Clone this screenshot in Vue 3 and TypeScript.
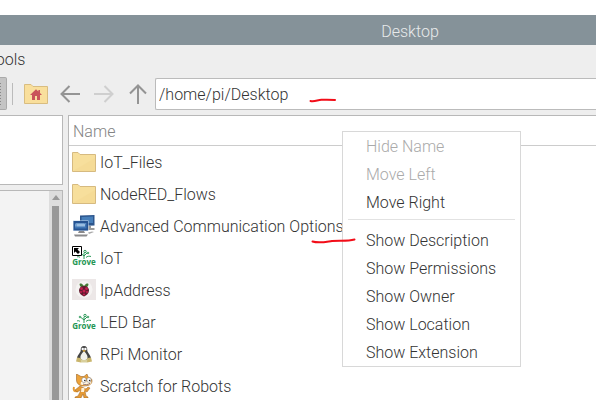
<script setup lang="ts">
import { ref } from 'vue'

type IconKind = 'folder' | 'network' | 'grove' | 'raspberry' | 'tux' | 'cat'

interface FileEntry {
  name: string
  icon: IconKind
  link?: boolean
}

const path = ref('/home/pi/Desktop')

const files: FileEntry[] = [
  { name: 'IoT_Files', icon: 'folder' },
  { name: 'NodeRED_Flows', icon: 'folder' },
  { name: 'Advanced Communication Options', icon: 'network' },
  { name: 'IoT', icon: 'grove', link: true },
  { name: 'IpAddress', icon: 'raspberry' },
  { name: 'LED Bar', icon: 'grove' },
  { name: 'RPi Monitor', icon: 'tux' },
  { name: 'Scratch for Robots', icon: 'cat' },
]

const columnActions = [
  { label: 'Hide Name', disabled: true },
  { label: 'Move Left', disabled: true },
  { label: 'Move Right', disabled: false },
]

const showActions = ['Show Description', 'Show Permissions', 'Show Owner', 'Show Location', 'Show Extension']
</script>

<template>
  <div class="window">
    <header class="titlebar">Desktop</header>

    <nav class="menubar">
      <button type="button" class="menu-button">Tools</button>
    </nav>

    <div class="toolbar">
      <button type="button" class="toggle" aria-label="Toggle view"></button>
      <span class="divider"></span>
      <button type="button" class="tool home" aria-label="Home">
        <svg width="24" height="20" viewBox="0 0 24 20">
          <path d="M.5 19.5V.5H7l2 2h14.5v17z" fill="#f9df9c" stroke="#d9bd80" />
          <path d="M12 5.2 6 11h2v5h3v-4h2v4h3v-5h2l-2-2V6h-1.6v1.4z" fill="#c9545a" />
        </svg>
      </button>
      <button type="button" class="tool" aria-label="Back">
        <svg width="20" height="20" viewBox="0 0 20 20" fill="none" stroke="#949494" stroke-width="2">
          <path d="M20 10H1.500M9.500 2 1.500 10l8 8" />
        </svg>
      </button>
      <button type="button" class="tool" aria-label="Forward" disabled>
        <svg width="20" height="20" viewBox="0 0 20 20" fill="none" stroke="#cfcfcf" stroke-width="2">
          <path d="M0 10h18.500M10.500 2l8 8-8 8" />
        </svg>
      </button>
      <button type="button" class="tool" aria-label="Up">
        <svg width="20" height="20" viewBox="0 0 20 20" fill="none" stroke="#949494" stroke-width="2">
          <path d="M10 20V1.500M2 9.500l8-8 8 8" />
        </svg>
      </button>
      <input v-model="path" class="path" type="text" aria-label="Location" spellcheck="false" />
    </div>

    <div class="body">
      <aside class="side">
        <div class="places"></div>
        <div class="tree">
          <div class="scrollbar">
            <svg width="8" height="5" viewBox="0 0 8 5"><path d="M4 0 8 5H0z" fill="#999" /></svg>
            <div class="thumb"></div>
          </div>
        </div>
      </aside>

      <main class="listing">
        <table>
          <thead>
            <tr><th scope="col">Name</th></tr>
          </thead>
          <tbody>
            <tr v-for="file in files" :key="file.name">
              <td>
                <div class="entry">
                  <svg v-if="file.icon === 'folder'" width="24" height="24" viewBox="0 0 24 24">
                    <path d="M.5 21.500V2.500H6l2 2h15.500v17z" fill="#f7df9c" stroke="#d6ba80" />
                    <path d="M1 21 23 8v13z" fill="#f3d993" opacity=".6" />
                  </svg>
                  <svg v-else-if="file.icon === 'network'" width="24" height="24" viewBox="0 0 24 24">
                    <path d="M8 1.500 22.500 1v10.500L8 12z" fill="#2d568d" />
                    <path d="M9.500 3 21 2.500V9H9.500z" fill="#477fba" />
                    <path d="M15 12h4v2h3.500v2H13z" fill="#9b9b9b" />
                    <path d="M1 6.500h15.500V17H1z" fill="#c7d8ea" />
                    <path d="M1.500 7H16v9.500H1.500z" fill="#265391" />
                    <path d="M3 9h11.500v5.500H3z" fill="#3e75b4" />
                    <path d="M4 12.500v-2l1-1 1 3 1-3 1 3 1-3 1 3 1-3 1 3 1-3" fill="none" stroke="#a9c9e8" />
                    <path d="M7 17h5l1 2H6zM2 20.500h14l-1.500 2H3z" fill="#8a8a8c" />
                    <path d="M16 18.500l4-1 2 .5-5 2z" fill="#aaa" />
                  </svg>
                  <svg v-else-if="file.icon === 'grove'" width="24" height="24" viewBox="0 0 24 24">
                    <text x="12" y="19" text-anchor="middle" class="grove-text">Grove</text>
                    <g fill="none" stroke="#2b9958" stroke-width="1">
                      <path d="M12 13V7M12 10l3-3M12 10 9 7.500M8 11.500c-1-1-2-1-3-.5M14 11.500c1-1.500 4-1.500 5-1" />
                      <circle cx="13" cy="5.500" r="1.200" /><circle cx="8" cy="7" r=".8" /><circle cx="16" cy="7" r=".8" />
                    </g>
                    <g v-if="file.link">
                      <path d="M.5 .5h9v9h-9z" fill="#fff" stroke="#000" />
                      <path d="M2 2h5L5.500 3.500 8 6 6 8 3.500 5.500 2 7z" fill="#000" />
                    </g>
                  </svg>
                  <svg v-else-if="file.icon === 'raspberry'" width="24" height="24" viewBox="0 0 24 24">
                    <path d="M0 1h24v21H0z" fill="#ece7e7" />
                    <circle cx="12" cy="11.500" r="8.500" fill="#f5f3f2" />
                    <path d="M12 8c-2.500-3-3.500-2.500-4.500-2 0 2 1.500 4 4.500 4s4.500-2 4.500-4c-1-.5-2-1-4.500 2" fill="#477a36" />
                    <path d="M12 8c-3 0-5 2-5 4.500 0 3 2.500 5 5 6 2.500-1 5-3 5-6C17 10 15 8 12 8" fill="#641b30" />
                    <g fill="#c4204f">
                      <circle cx="9.500" cy="10.700" r="1.400" /><circle cx="14.500" cy="10.700" r="1.400" />
                      <circle cx="12" cy="13" r="1.500" /><circle cx="9" cy="14" r="1" />
                      <circle cx="15" cy="14" r="1" /><circle cx="12" cy="16.500" r="1.100" />
                    </g>
                  </svg>
                  <svg v-else-if="file.icon === 'tux'" width="24" height="24" viewBox="0 0 24 24">
                    <path d="M12 4c-2.500 0-3.500 2-3.300 4.500C8.500 11 5 13 5 17l3 2h8l3-2c0-4-3.500-6-3.700-8.500C15.500 6 14.500 4 12 4" fill="#444" />
                    <path d="M12 9c-1.500 2-4 4-3.500 7 .5 3 6.500 3 7 0 .5-3-2-5-3.500-7" fill="#f1f0ea" />
                    <circle cx="10.700" cy="7" r="1.200" fill="#fff" /><circle cx="13.400" cy="7" r="1.200" fill="#fff" />
                    <path d="M10.300 8.500 12 8l2 .7-2 1.300z" fill="#d9a53a" />
                    <path d="M5 15.500 8.500 16l1.500 3-1 1.500-5-1zM19 15.500l-3.500.5-1.500 3 1 1.500 5-1z" fill="#c9b56c" />
                    <path d="M8.500 16.500c1 2 6 2 7 0L15 20.500H9z" fill="#d8cf9c" />
                  </svg>
                  <svg v-else width="24" height="24" viewBox="0 0 24 24">
                    <path d="M6 17c-4 1-5-1-4-4" fill="none" stroke="#e39a35" stroke-width="2" />
                    <path d="M8 12 3 16l2 2 4-2-3 6-3 1v1h6l2-4 1 4h4v-1l-2-1-1-5 2 1 3-4-2-1-2 2-4-2z" fill="#e59a35" stroke="#9c6426" stroke-width=".5" />
                    <path d="M4.500 0 9 2.500h3L15 0l1 3c3 1 4 2 4 4 0 3-3 5-8 5-4 0-7.500-2-7.500-6z" fill="#eda33a" stroke="#9c6426" stroke-width=".6" />
                    <path d="M9 8c3-1 8-1 10.500-.5 0 3-5 5-11 3z" fill="#fff4df" />
                    <ellipse cx="12" cy="6" rx="2.300" ry="2.600" fill="#fff" stroke="#777" stroke-width=".5" />
                    <ellipse cx="17" cy="6" rx="2.200" ry="2.400" fill="#fff" stroke="#777" stroke-width=".5" />
                    <circle cx="12.800" cy="6.500" r=".8" fill="#222" /><circle cx="17.600" cy="6.500" r=".8" fill="#222" />
                    <path d="M11 10c2 1 5 1 7-.8" fill="none" stroke="#644" stroke-width=".7" />
                    <path d="M9.500 14h3l-.5 4h-3z" fill="#fff0d5" />
                  </svg>
                  <span class="name">{{ file.name }}</span>
                </div>
              </td>
            </tr>
          </tbody>
        </table>
      </main>
    </div>

    <div class="context-menu" role="menu">
      <button
        v-for="action in columnActions"
        :key="action.label"
        type="button"
        role="menuitem"
        :disabled="action.disabled"
      >{{ action.label }}</button>
      <hr />
      <button v-for="label in showActions" :key="label" type="button" role="menuitem">{{ label }}</button>
    </div>

    <svg class="mark path-mark" width="30" height="8" viewBox="0 0 30 8">
      <path d="M1.500 5c4 1 7-1 11-1.200 5-.3 9-.2 13.500.2" />
    </svg>
    <svg class="mark menu-mark" width="46" height="8" viewBox="0 0 46 8">
      <path d="M1.500 4.500C8 6.500 14 5 21 4c7-.8 15 .5 22.500-1.500" />
    </svg>
  </div>
</template>

<style>
body {
  margin: 0;
  background: #fff;
}
</style>

<style scoped>
.window {
  position: relative;
  display: flex;
  flex-direction: column;
  box-sizing: border-box;
  height: 100vh;
  padding-top: 15px;
  overflow: hidden;
  background: linear-gradient(#fff 15px, #eee 15px);
  color: #333;
  font: 300 16px/20px Roboto, "Liberation Sans", sans-serif;
}

button,
input {
  margin: 0;
  padding: 0;
  border: 0;
  background: none;
  color: inherit;
  font: inherit;
}

svg {
  display: block;
  flex: none;
}

.titlebar {
  flex: none;
  padding-left: 224px;
  background: #859299;
  color: #e8eaeb;
  line-height: 34px;
  height: 30px;
  text-align: center;
}

.menubar {
  display: flex;
  flex: none;
  height: 32px;
}

.menu-button {
  margin-left: -13px;
  height: 30px;
}

.toolbar {
  display: flex;
  flex: none;
  align-items: center;
  height: 33px;
}

.toggle {
  box-sizing: border-box;
  width: 7px;
  height: 33px;
  border: 1px solid #aaa;
  border-left: 0;
  border-radius: 0 2px 2px 0;
  background: #c4c4c4;
}

.toggle::before {
  content: "";
  display: block;
  width: 1px;
  height: 22px;
  background: repeating-linear-gradient(#888 0 1px, transparent 1px 3px);
}

.divider {
  width: 1px;
  height: 22px;
  margin: 0 11px 0 5px;
  background: #bbb;
}

.tool {
  margin-right: 14px;
}

.tool.home {
  margin-right: 12px;
}

.tool:last-of-type {
  margin-right: 7px;
}

.path {
  box-sizing: border-box;
  flex: 1;
  min-width: 0;
  height: 32px;
  padding: 2px 0 0 3px;
  border: 1px solid #bbb;
  border-right: 0;
  border-radius: 2px 0 0 2px;
  background: #fff;
}

.body {
  display: flex;
  flex: 1;
  gap: 5px;
  min-height: 0;
  padding-top: 5px;
}

.side {
  display: flex;
  flex: none;
  flex-direction: column;
  gap: 5px;
  width: 63px;
}

.places,
.tree {
  box-sizing: border-box;
  border: 1px solid #b8b8b8;
  border-left: 0;
}

.places {
  height: 70px;
  background: #fff;
}

.tree {
  display: flex;
  flex: 1;
  justify-content: flex-end;
  border-bottom: 0;
  background: #f3f3f3;
}

.scrollbar {
  display: flex;
  flex-direction: column;
  gap: 6px;
  align-items: center;
  width: 13px;
  padding-top: 4px;
  background: #ddd;
}

.thumb {
  flex: 1;
  width: 7px;
  background: #999;
}

.listing {
  flex: 1;
  min-width: 0;
  border: 1px solid #b8b8b8;
  border-width: 1px 0 0 1px;
  background: #fff;
}

table {
  width: 100%;
  border-spacing: 0;
}

th {
  height: 27px;
  padding: 2px 4px 0;
  border-bottom: 1px solid #ccc;
  color: #848484;
  font-weight: 300;
  text-align: left;
}

td {
  height: 32px;
  padding: 0 3px;
}

.entry {
  display: flex;
  gap: 4px;
  align-items: center;
  white-space: nowrap;
}

.name {
  padding-top: 2px;
}

.grove-text {
  fill: #239653;
  font: 700 8px "Open Sans", sans-serif;
}

.context-menu {
  position: absolute;
  top: 131px;
  left: 342px;
  display: flex;
  flex-direction: column;
  box-sizing: border-box;
  width: 179px;
  border: 1px solid #d8d8d8;
  background: #fff;
}

.context-menu button {
  height: 28px;
  padding: 2px 23px 0;
  text-align: left;
}

.context-menu button:disabled {
  color: #aaa;
}

.context-menu hr {
  align-self: stretch;
  height: 1px;
  margin: 3px 5px 6px;
  border: 0;
  background: #e2e2e2;
}

.mark {
  position: absolute;
  fill: none;
  stroke: #f20d18;
  stroke-width: 2;
  stroke-linecap: round;
}

.path-mark {
  top: 96px;
  left: 309px;
}

.menu-mark {
  top: 237px;
  left: 311px;
}
</style>
